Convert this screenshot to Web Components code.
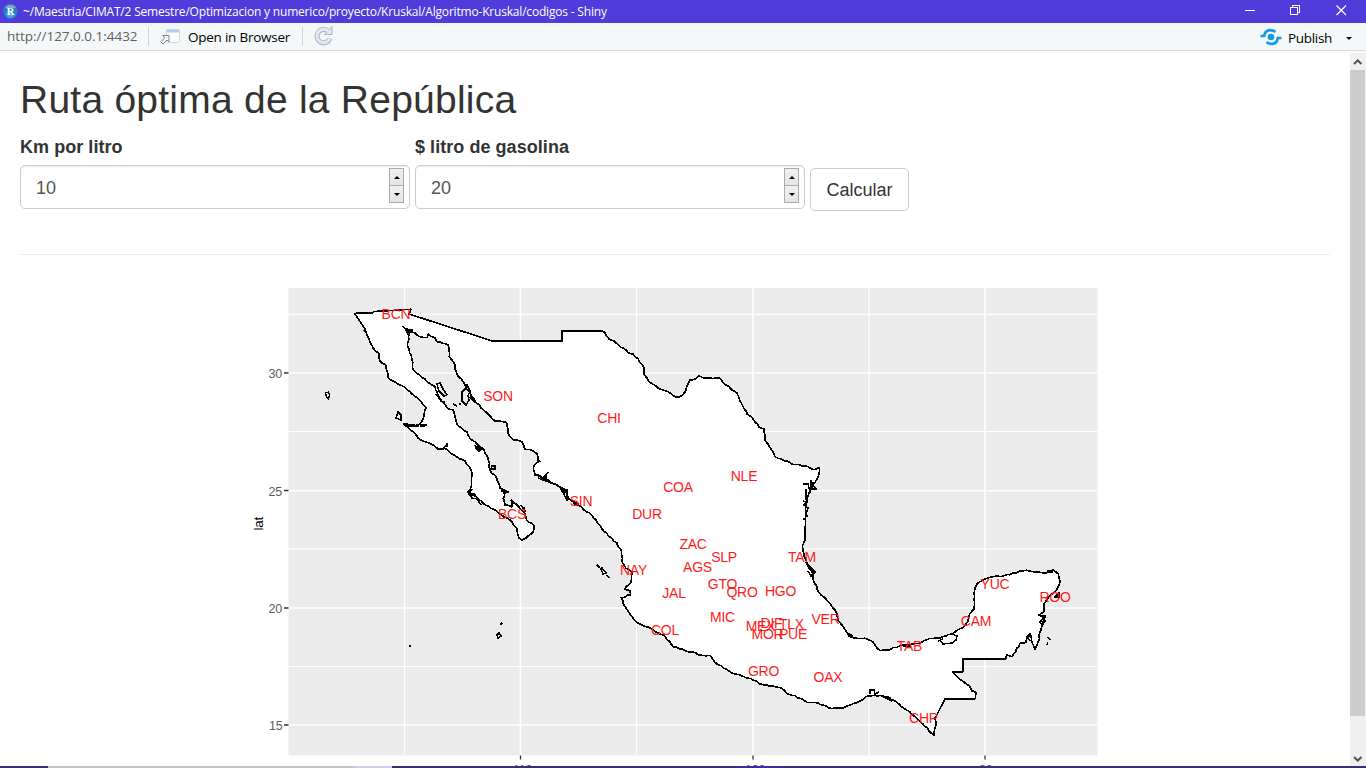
<!DOCTYPE html>
<html lang="es">
<head>
<meta charset="utf-8">
<title>codigos - Shiny</title>
<style>
html,body{margin:0;height:100%;overflow:hidden;background:#fff}
</style>
</head>
<body>
<shiny-window></shiny-window>
<script>
const define = (name, html, setup) => customElements.define(name, class extends HTMLElement {
  connectedCallback() {
    if (this.shadowRoot) return;
    this.attachShadow({mode: 'open'}).innerHTML = html;
    if (setup) setup(this.shadowRoot, this);
  }
});

define('title-bar', `
<style>
:host{display:flex;align-items:center;height:23px;background:#4f3cdb;color:#fff;font:12px/23px "Open Sans","Noto Sans",sans-serif;box-sizing:border-box;padding-left:3px}
.t{margin-left:5px;white-space:pre;letter-spacing:-.19px}
.logo{width:15px;height:16px;flex:none;margin-top:-1px}
.buttons{margin-left:auto;display:flex;width:140px;height:23px}
</style>
<svg class="logo" viewBox="0 0 15 16"><defs><radialGradient id="g" cx=".5" cy=".75" r=".7"><stop offset="0" stop-color="#4fc4f0"/><stop offset=".55" stop-color="#2c7cc0"/><stop offset="1" stop-color="#3a6fae"/></radialGradient></defs><circle cx="7.4" cy="8" r="7.4" fill="url(#g)"/><path d="M2 5a6 5 0 0 1 11 0z" fill="#a3c3e2" opacity=".7"/><text x="7.5" y="11.6" text-anchor="middle" font-family="Liberation Serif,serif" font-weight="bold" font-size="10.5" fill="#fff">R</text></svg>
<span class="t"><slot></slot></span>
<svg class="buttons" viewBox="0 0 140 23" fill="none" stroke="#fff" shape-rendering="crispEdges"><path d="M19 10.5h10"/><path d="M64.500 7.500h7v7h-7zM66.500 7.500v-2h7v7h-2"/><path d="M110.500 5.500l9.500 9.500M120 5.500l-9.500 9.500" shape-rendering="auto" stroke-width="1.2"/></svg>`);

define('tool-bar', `
<style>
:host{display:flex;align-items:center;height:30px;box-sizing:border-box;background:linear-gradient(#f4f8f9 0 27px,#d5dadd 27px 28px,#f7f9fa 28px);padding:0 14px 2px 7px;font:13.500px/26px "Open Sans","Noto Sans",sans-serif;color:#000}
.url{color:#606060;width:141px;white-space:nowrap;letter-spacing:-.02px;margin-top:-2px}
.sep{width:1px;height:19px;background:#cfd4d6;margin-top:-2px}
.icon{width:20px;height:18px;margin-left:11px}
.open{margin:0 0 0 8px;width:105px;letter-spacing:-.24px;white-space:nowrap}
.s2{margin-left:9px}
.re{width:20px;height:20px;margin-left:11px;margin-top:-2px}
.pub{margin-left:auto;width:22px;height:18px}
.p{margin:1px 0 0 6px;width:46px;letter-spacing:-.3px;white-space:nowrap}
.arr{border:3px solid transparent;border-top-color:#111;border-bottom:0;margin:3px 0 0 12px}
</style>
<span class="url">http://127.0.0.1:4432</span><i class="sep"></i>
<svg class="icon" viewBox="0 0 20 18"><rect x="6.500" y="1.500" width="13" height="13" rx="1" fill="#fbfdff" stroke="#d0d9e2"/><path d="M6 1.500h13v3H6z" fill="#b5cdea"/><path d="M2.500 7.500h6.500V14L7 12l-4 4-2.200-2.200 4-4z" fill="#f4f8f9" stroke="#7d8790" stroke-width="1"/></svg>
<span class="open">Open in Browser</span><i class="sep s2"></i>
<svg class="re" viewBox="0 0 20 20" fill="none"><path d="M14.500 5.500A6.700 6.700 0 1 0 16 12.500" stroke="#aab4c4" stroke-width="5"/><path d="M10.500 8.500h7.500v-8z" fill="#e2e9f2" stroke="#aab4c4"/><path d="M15 6A6.700 6.700 0 1 0 15.700 12.800" stroke="#e5ebf4" stroke-width="3"/></svg>
<svg class="pub" viewBox="0 0 22 18" fill="none" stroke="#1399e6" stroke-width="2.700"><circle cx="11" cy="9" r="3.300" fill="#1399e6" stroke="none"/><path d="M.5 8h3.700C5 1.500 11 .8 15.500 3.800M21.500 10h-3.700C17 16.500 11 17.200 6.500 14.200"/></svg>
<span class="p">Publish</span><i class="arr"></i>`);

define('number-field', `
<style>
:host{display:flex;flex-direction:column;width:390px;font:18px/24px "Liberation Sans",Arial,sans-serif;color:#555}
label{font-weight:bold;color:#333;height:30px;letter-spacing:.05px}
.box{display:flex;align-items:center;box-sizing:border-box;height:44px;border:1px solid #ccc;border-radius:5px;padding:0 5px 0 15px;box-shadow:inset 0 1px 1px rgba(0,0,0,.075)}
.v{flex:1;padding-top:1px}
.spin{display:flex;flex-direction:column;width:15px;height:35px;margin-top:-3px;background:#adadad;padding:1px;gap:1px;box-sizing:border-box}
.spin span{flex:1;background:linear-gradient(#f1f1f1,#e5e5e5);display:flex;align-items:center;justify-content:center}
.up{border:3px solid transparent;border-bottom-color:#000;border-top:0}
.dn{border:3px solid transparent;border-top-color:#000;border-bottom:0}
</style>
<label><slot></slot></label>
<div class="box"><span class="v"></span><div class="spin"><span><i class="up"></i></span><span><i class="dn"></i></span></div></div>`,
(root, el) => root.querySelector('.v').textContent = el.getAttribute('value'));

define('action-button', `
<style>:host{display:flex;align-items:center;justify-content:center;box-sizing:border-box;width:99px;height:43px;margin-top:33px;padding-top:1px;border:1px solid #ccc;border-radius:5px;font:18px "Liberation Sans",Arial,sans-serif;color:#333}</style><slot></slot>`);

define('side-scroll', `
<style>
:host{display:flex;flex-direction:column;width:16px;background:#f0f0f0}
svg{width:16px;height:17px;flex:none}
.thumb{width:15px;height:646px;background:#cdcdcd}
.end{margin-top:auto;margin-bottom:0}
</style>
<svg viewBox="0 0 16 17" fill="none" stroke="#505050" stroke-width="2"><path d="M4 11l3.700-3.700L11.400 11"/></svg><div class="thumb"></div><svg class="end" viewBox="0 0 16 17" fill="none" stroke="#505050" stroke-width="2"><path d="M4 8l3.700 3.700L11.400 8"/></svg>`);

/* Coast runs are roughened between their vertices; border runs stay straight. */
const runs = [
['b','355,314 358,312.700 373,312.700 374,311.500 411,309.300 409,314 493.300,341.300 562,341.300 562,330.700 602,330.700'],
['c','605,332.700 609.300,339.300 614,341 628.300,352.700 633.300,354.300 638.300,359 644,368.300 644.300,375 649,381.700 658.300,388.300 666.700,391 673.300,395.700 679.300,397.300 685.700,391 690,380 696.700,378 699,375.700 702.700,377.700 720,378.300 723.300,382.700 736.700,392.700 740,400.700 747.300,414.300 753.300,419.300 759.300,427.300 764.300,429 765,440 770,447.300 775,456.700 781.700,459 792.700,464.300 805,465.700 814,469.700 819.300,467.700 818.700,475 815,482.300 810,490 807.300,498.300 805.700,511.700'],
['b','805,540 802.300,546'],
['c','804.300,556.700 807.300,565 813.300,575 813.300,580 819.300,592.700 830,603.300 835,610 838.300,621 848.300,634.300 853.300,637.700 865,638.300 873.300,642.300 880,650.700 886.700,650.300 903.300,645 920,643.300 923.300,641 930,638.300 940,638.300 951.700,634 963.300,627.300 967.700,621.700 970,613.300 974,609 974.700,590 977.300,583.300 990,577.300 1010,574.700 1020,571 1026.700,570.300 1036.700,571.700 1046.700,572.700 1052.700,569.700 1058.300,574 1060,581.700 1056.700,590 1048.300,597.300 1044.300,603.300 1044,611.700 1039,615 1045,617.300 1041.700,626.700 1038.300,641.700 1035,649.300 1031.700,641.700 1030.700,635 1026.700,638.300 1026,642.300 1020,643.300 1012.300,656.700 1006.700,655'],
['b','1005.700,658.700 962.700,658.700 962.700,671.700 952.300,671.700'],
['c','960.700,680 968.300,685 971.700,690.700 976,692.300'],
['b','975.300,698.700 945,699 935,718.300'],
['c','936,722.300 934,735.300 920,721.700 906.700,710 893.300,700 883.300,696 868.300,695.700 860,701 841.700,708.300 831.700,708.700 818.300,703.300 806.700,702.300 795,695.700 786.700,693.300 781.700,688.300 760,684 753.300,680 730,671.700 715,662.300 710,655.300 701.700,655.300 673.300,646.700 663.300,635 653.300,630 636.700,622.300 625,606.700 621,597.700 630.700,595 630,590.700 624.300,589 630.700,583.300 632.300,572.700 626,568.300 622,561.700 621.700,551.700 616.700,542.700 608.300,536 591.700,515 578.300,505 568.300,498.300 565,490 550,481.700 535,474 533.500,466.700 538.300,461.700 536.700,453.300 531.700,450 525,449.300 521.700,441.700 513.300,440 508.300,434 506.700,422.700 495,421 475,401 465,385 456.700,373.300 455,365 449.300,356.700 448.300,345 436.700,341.700 435,337.700 428.300,334.300 427,337.500 421.700,337.300 411.700,331.700 403.300,326.700 409,333.300 407.700,346.700 411.700,358.300 413.300,370 421.700,377.300 435,386.700 440,398.300 448.300,409 453.300,410 456.700,423.300 458.300,426 466.700,431.700 470,438.300 475,441.700 484,450 488.300,460 490,470 496.700,478.300 500,488.300 505,491.700 503.300,498.300 505,505 511.700,507 511.700,500 517,505 525,513.300 526.700,520 534.300,526 533.300,531.700 522.300,540 519,538.300 516.700,528.300 511.700,521.700 501.700,515 483.300,503.300 473.300,495 468.300,491.700 471.700,485 472.300,473.300 465,461 456.700,456.700 445,448.300 438.300,449.300 428.300,442.700 418.300,438.300 411.700,430.700 403.300,424 418.300,425 421.700,421.700 424,415 426,407.500 416.700,397.300 405,387.300 388.300,378.300 385.700,365 380,361.700 379,353.300 373.300,348.300 366,331.700 360,321.700']
];
function outline() {
  const pts = [];
  let n = 0;
  for (const [kind, list] of runs) {
    list.split(' ').forEach((pair, i) => {
      const [x, y] = pair.split(',').map(Number);
      if (kind === 'c' && i) {
        const [px, py] = pts[pts.length - 1], d = Math.hypot(x - px, y - py), k = Math.floor(d / 3);
        for (let j = 1; j < k; j++) {
          const o = Math.sin(++n * n * 1.7) * .6;
          const t = j / k;
          pts.push([px + (x - px) * t - (y - py) / d * o, py + (y - py) * t + (x - px) / d * o]);
        }
      }
      pts.push([x, y]);
    });
  }
  return 'M' + pts.map(p => p[0].toFixed(1) + ' ' + p[1].toFixed(1)).join('L') + 'Z';
}
const states = 'BCN 396 319,SON 498 400.500,CHI 609 423,NLE 744 481,COA 678 491.500,DUR 647 519,SIN 581 505.500,BCS 512 519,ZAC 693 549,SLP 724 561.500,TAM 802 561.500,AGS 697.5 572,NAY 633.5 575,GTO 722.5 589,QRO 742 596.500,HGO 780.5 595.500,JAL 674 598,MIC 722.5 621.500,VER 825.5 624,COL 665 634.500,MEX 760.5 630.500,DIF 771.5 627.500,TLX 791.5 629,MOR 767.5 638.500,PUE 793 638.5,TAB 909.5 651,CAM 976 625.500,YUC 995 589,ROO 1055 602,GRO 763.5 676,OAX 828 681.500,CHP 923.5 723';

define('mexico-map', `
<style>
:host{display:block;height:482px}
svg{display:block;width:1100px;height:482px;font-family:"Liberation Sans",Arial,sans-serif}
.st{font-size:14px;letter-spacing:-.25px;fill:#ff1a1a;text-anchor:middle}
.ax{font-size:12.500px;fill:#5c5c5c;letter-spacing:-.2px}
#land,.crisp{shape-rendering:crispEdges}
</style>
<svg viewBox="0 284 1100 482">
<rect x="288.500" y="288" width="809" height="467.500" fill="#ebebeb"/>
<g stroke="#fff" fill="none"><path stroke-width="1.200" d="M404.500 288v467.500M636.500 288v467.500M869 288v467.500M288.500 314.300H1097.500M288.500 431.500H1097.500M288.500 549.200H1097.500M288.500 666.500H1097.500"/><path stroke-width="1.600" d="M520.500 288v467.500M753 288v467.500M985 288v467.500M288.500 373H1097.500M288.500 490.800H1097.500M288.500 608H1097.500M288.500 725H1097.500"/></g>
<path d="M284 373h4.500M284 490.500h4.500M284 608h4.500M284 725h4.500M520.500 755.500v4M753 755.500v4M985 755.500v4" stroke="#333" stroke-width="1.300"/>
<path id="land" fill="#fff" stroke="#000" stroke-width="1.650" stroke-linejoin="round"/>
<g class="crisp" fill="none" stroke="#000" stroke-width="1.500" stroke-linejoin="round">
<path d="M325.500 393l3-1 1 3-1 4-2-2zM396 418l2-6 3 3v5zM437 384l3-1 3 6 4 6-3 1-5-5zM436 394l5 7 4 1M462 401v-9l3-3 2-4 3 6-2 5 1 4-3 5zM453 404l4 2M460 403v1.500M470 397l6 6" />
<path d="M597 565l3 3M601 569l2 5 3-1-4-5zM607 575l2 3M411 646h-2.500M500 625l2-2M497 635l2-2 2 3-3 2z"/>
<path d="M1047.500 637l2.500 3M1047 645l1-2.500M1055 597l4 0 0-4zM1038 615l7 1-5 6 5-1-3 5-2-5M1030 641l-3-4 3-4"/>
<path d="M940 640l3 4 9-1 4-3 1-4-5-2M938 641l5-2M803 484h5l2 8 3-10M806 489v11M811 480v9h5l-5-7 3 3M803 501l4 1-3 3 4 3-2 7 2 2M804 518v2M808 565l7 7-4 4-3-5M848 636l6 2M806 562l9 10"/>
<path d="M870 694l0-4h4l1 4 4-2M882 696l4 2 6 3" />
<path d="M475 445l4 6 2-2-4-5M490 471l2-5h3v3h-4M502 489l6 3-5 1M521 505l4 6-1-4M511 500l3 4M468 492l4 6 5 1 4 6M472 489l-3 5 6 2M405 426h14M420 425h7M443 449l4-5v3M405 330h7l-5 4M380 360l2 4M364 330l3 3M449 347v5M539 460l1 2M534 475l6 1 6 4 0-4-4 3 6-7M538 478l13 5M559 487l8 3 0 10-5-9M571 501l8 3"/>
</g>
<g class="crisp" stroke="#000" stroke-width="3"><path d="M561 488l5 5M573 502l5 3M406 331l5 1M848 634l5 3M886 697l5 2M473 494l3 2M476 447l4 4M501 490l5 2M420 425h5M903 646l8-1M1047 571l6 1"/></g>
<g id="states"></g>
<g class="ax"><text x="268.500" y="378">30</text><text x="268.500" y="495.500">25</text><text x="268.500" y="613">20</text><text x="269" y="730">15</text><text x="513" y="774">110</text><text x="745" y="774">100</text><text x="979" y="774">90</text><text transform="translate(263 530.500) rotate(-90)" font-size="13.500" fill="#000">lat</text></g>
</svg>`, root => {
  root.querySelector('#land').setAttribute('d', outline());
  root.querySelector('#states').innerHTML = states.split(',').map(s => {
    const [name, x, y] = s.split(' ');
    return `<text class="st" x="${x}" y="${y}">${name}</text>`;
  }).join('');
});

define('task-edge', `<style>:host{display:block;height:2px;background:linear-gradient(90deg,#3a3070 0 48px,#c5c5c9 48px 355px,#d2cdee 355px 392px,#3a3070 392px 738px,#3b2da0 738px 781px,#3a3070 781px)}</style>`);

define('shiny-window', `
<style>
:host{display:flex;flex-direction:column;width:1366px;height:768px;overflow:hidden;background:#fff}
.body{flex:1;min-height:0;display:flex}
main{flex:1;min-width:0;overflow:hidden}
h2{margin:0;padding:25px 0 0 20px;height:57px;font:39px/43px "Liberation Sans",Arial,sans-serif;letter-spacing:.24px;color:#333}
.row{display:flex;gap:5px;margin:0 0 0 20px;height:119px}
hr{border:0;height:1px;background:#eee;margin:0 20px 29px}
</style>
<title-bar>~/Maestria/CIMAT/2 Semestre/Optimizacion y numerico/proyecto/Kruskal/Algoritmo-Kruskal/codigos - Shiny</title-bar>
<tool-bar></tool-bar>
<div class="body"><main>
<h2>Ruta óptima de la República</h2>
<div class="row"><number-field value="10">Km por litro</number-field><number-field value="20">$ litro de gasolina</number-field><action-button>Calcular</action-button></div>
<hr><mexico-map></mexico-map>
</main><side-scroll></side-scroll></div>
<task-edge></task-edge>`);
</script>
</body>
</html>
